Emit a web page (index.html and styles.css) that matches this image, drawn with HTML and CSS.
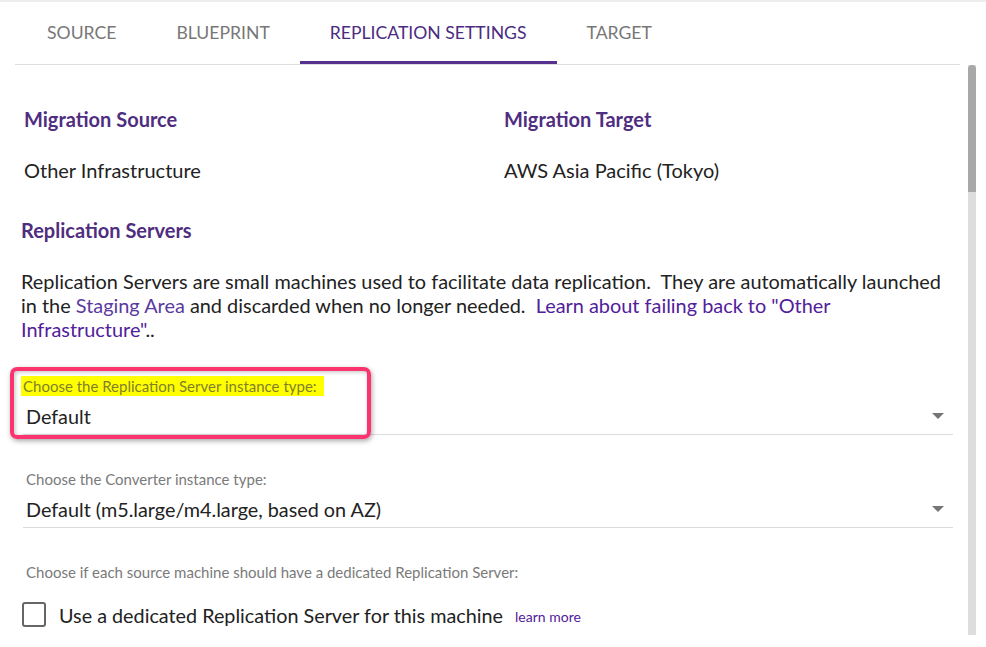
FILE: index.html
```html
<!DOCTYPE html>
<html lang="en">
<head>
    <meta charset="UTF-8">
    <meta name="viewport" content="width=device-width, initial-scale=1.0">
    <title>Replication Settings</title>
    <link rel="stylesheet" href="styles.css">
</head>
<body>
    <div class="top-line"></div>
    <div class="tabs">
        <div class="tab">SOURCE</div>
        <div class="tab">BLUEPRINT</div>
        <div class="tab active">REPLICATION SETTINGS</div>
        <div class="tab">TARGET</div>
    </div>

    <div class="main">
        <div class="panel">
            <div class="summary">
                <div class="summary-col">
                    <div class="summary-title">Migration Source</div>
                    <div class="summary-value">Other Infrastructure</div>
                </div>
                <div class="summary-col">
                    <div class="summary-title">Migration Target</div>
                    <div class="summary-value">AWS Asia Pacific (Tokyo)</div>
                </div>
            </div>

            <div class="section-title">Replication Servers</div>
            <p class="section-text">Replication Servers are small machines used to facilitate data replication.&nbsp; They are automatically launched in the <a href="#">Staging Area</a> and discarded when no longer needed.&nbsp; <a href="#" class="dark-link">Learn about failing back to "Other Infrastructure"</a>..</p>

            <div class="field highlighted">
                <div class="field-label"><span class="marker">Choose the Replication Server instance type:</span></div>
                <div class="field-value">Default<span class="caret"></span></div>
                <div class="callout"></div>
            </div>

            <div class="field">
                <div class="field-label">Choose the Converter instance type:</div>
                <div class="field-value">Default (m5.large/m4.large, based on AZ)<span class="caret"></span></div>
            </div>

            <div class="field-label plain">Choose if each source machine should have a dedicated Replication Server:</div>
            <label class="check-row">
                <span class="checkbox"></span>
                <span class="check-text">Use a dedicated Replication Server for this machine</span>
                <a href="#" class="small-link">learn more</a>
            </label>
        </div>
        <div class="scrollbar">
            <div class="thumb"></div>
        </div>
    </div>
</body>
</html>
```

FILE: styles.css
```css
body {
    margin: 0;
    background-color: white;
    color: #222;
    font-family: Lato, "Open Sans", sans-serif;
}

.top-line {
    height: 2px;
    background-color: #ededed;
}

.tabs {
    display: flex;
    margin: 0 26px 0 15px;
    padding-left: 2px;
    border-bottom: 1px solid #dedede;
}
.tab {
    padding: 20px 30px 17px;
    font-size: 17.6px;
    line-height: 22px;
    color: #777;
    border-bottom: 3px solid transparent;
}
.tab.active {
    color: #4b2c82;
    border-bottom-color: #55308c;
}

.main {
    display: flex;
    padding-left: 15px;
}
.panel {
    width: 945px;
    padding-top: 42px;
}

.scrollbar {
    width: 8px;
    height: 570px;
    margin-left: 8px;
    background-color: #dddddd;
}
.thumb {
    height: 127px;
    background-color: #a8a8a8;
    border-radius: 4px 4px 0 0;
}

.summary {
    display: grid;
    grid-template-columns: 480px 1fr;
    padding-left: 9px;
}
.summary-title {
    font-size: 20px;
    font-weight: bold;
    line-height: 24px;
    color: #4f2d7f;
}
.summary-value {
    margin-top: 27px;
    font-size: 20px;
    line-height: 24px;
    color: #222;
}

.section-title {
    margin: 36px 0 0 6px;
    font-size: 20px;
    font-weight: bold;
    line-height: 24px;
    color: #4f2d7f;
}
.section-text {
    margin: 27px 0 0 6px;
    width: 932px;
    font-size: 19.9px;
    line-height: 24px;
    color: #222;
}
.section-text a {
    color: #5a3aa0;
    text-decoration: none;
}
.section-text a.dark-link {
    color: #52209a;
}

.field {
    position: relative;
    margin: 34px 0 0 8px;
    width: 930px;
    border-bottom: 1px solid #dcdcdc;
    padding-bottom: 4px;
}
.highlighted {
    margin-top: 35px;
}
.field-label {
    padding-left: 3px;
    font-size: 15px;
    line-height: 20px;
    color: #7a7a7a;
}
.field-label.plain {
    margin: 34px 0 0 11px;
    padding-left: 0;
}
.marker {
    display: inline-block;
    padding: 0 7px 0 2px;
    margin-left: -5px;
    background-color: #ffff00;
    color: #7f7f2a;
}
.field-value {
    display: flex;
    justify-content: space-between;
    align-items: center;
    margin-top: 6px;
    padding-left: 3px;
    font-size: 19.8px;
    line-height: 28px;
    color: #222;
}
.caret {
    width: 0;
    height: 0;
    margin-right: 9px;
    border-left: 6px solid transparent;
    border-right: 6px solid transparent;
    border-top: 6px solid #757575;
}

.callout {
    position: absolute;
    left: -13px;
    top: -9px;
    width: 353px;
    height: 64px;
    border: 4px solid #fb3470;
    border-radius: 7px;
    box-shadow: 1px 2px 5px rgba(0, 0, 0, 0.35), inset 1px 1px 4px rgba(0, 0, 0, 0.25);
}

.check-row {
    display: flex;
    align-items: center;
    margin: 20px 0 0 7px;
}
.checkbox {
    width: 20px;
    height: 21px;
    border: 2px solid #666;
    border-radius: 3px;
}
.check-text {
    margin-left: 13px;
    font-size: 19.8px;
    color: #222;
}
.small-link {
    margin: 3px 0 0 12px;
    font-size: 14px;
    color: #52209a;
    text-decoration: none;
}
```
